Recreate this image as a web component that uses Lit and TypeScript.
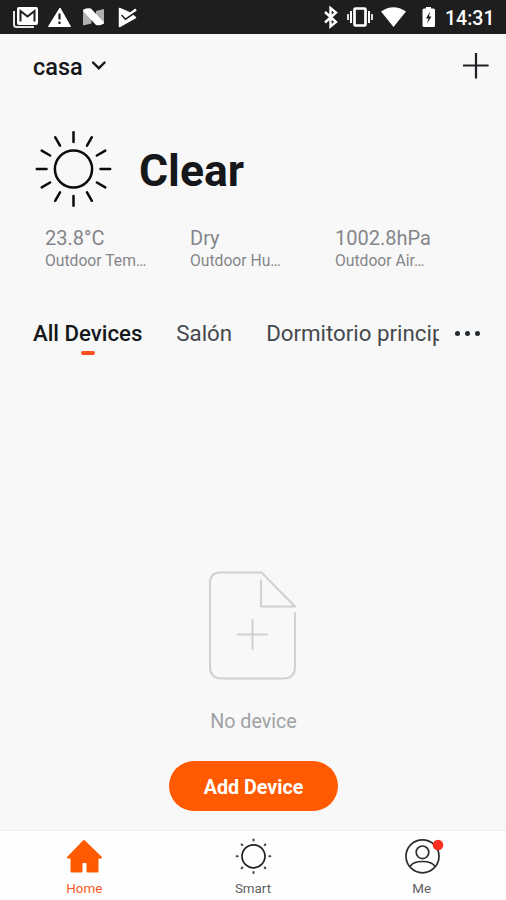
import { LitElement, html, css, svg } from "lit";
import { customElement } from "lit/decorators.js";

const rays = (n: number, cx: number, cy: number, r1: number, r2: number) =>
  Array.from({ length: n }, (_, i) => {
    const a = (i * 2 * Math.PI) / n;
    return svg`<line x1=${cx + r1 * Math.cos(a)} y1=${cy + r1 * Math.sin(a)} x2=${cx + r2 * Math.cos(a)} y2=${cy + r2 * Math.sin(a)} />`;
  });

@customElement("app-root")
export class AppRoot extends LitElement {
  static styles = css`
    :host {
      display: flex;
      flex-direction: column;
      width: 506px;
      height: 900px;
      overflow: hidden;
      background: #f8f8f8;
      color: #15171a;
      font-family: Roboto, sans-serif;
    }
    * { box-sizing: border-box; }
    svg { display: block; flex: none; }
    .status {
      height: 34px;
      flex: none;
      background: #1e1e1e;
      display: flex;
      align-items: center;
      justify-content: space-between;
      color: #fff;
      padding-right: 11px;
    }
    .status-right { display: flex; align-items: center; }
    .clock { font-size: 19.5px; font-weight: 500; line-height: 34px; padding-top: 3px; width: 50px; white-space: nowrap; }
    .header {
      height: 64px;
      flex: none;
      display: flex;
      align-items: center;
      justify-content: space-between;
      padding: 0 17px 0 33px;
    }
    .home { display: flex; align-items: center; gap: 8px; font-size: 23.5px; font-weight: 500; line-height: 28px; }
    .home-name { padding-top: 2px; }
    .weather { display: flex; align-items: center; gap: 27px; height: 80px; flex: none; margin: 31px 0 0 35px; }
    .condition { font-size: 44.5px; font-weight: 700; line-height: 52px; padding-top: 4px; white-space: nowrap; }
    .metrics { display: grid; grid-template-columns: 145px 145px 145px; margin: 17px 0 0 45px; color: #85868a; flex: none; }
    .value { font-size: 20px; line-height: 24px; }
    .label { font-size: 15.7px; line-height: 20px; padding-top: 1px; }
    .tabs { display: flex; margin: 48px 0 0 33px; height: 38px; flex: none; font-size: 22.3px; line-height: 28px; }
    .rooms { display: flex; gap: 34px; width: 406px; overflow: hidden; white-space: nowrap; color: #45484c; }
    .tab { flex: none; }
    .tab.active { color: #15171a; font-weight: 500; font-size: 22.2px; display: flex; flex-direction: column; align-items: center; }
    .tab.active::after { content: ""; width: 14px; height: 4px; border-radius: 2px; background: #fb4d20; margin-top: 4px; }
    .more { display: flex; gap: 5px; padding: 12px 0 0 16px; }
    .dot { width: 5px; height: 5px; border-radius: 50%; background: #222a30; }
    .empty { flex: 1; display: flex; flex-direction: column; align-items: center; padding-top: 213px; }
    .empty-text { color: #a0a2a5; font-size: 19.7px; line-height: 24px; margin: 30px 0 0 1px; }
    .add {
      width: 169px; height: 50px; margin-top: 27px;
      border: 0; border-radius: 25px; background: #ff5a00; color: #fff;
      font: 700 19.7px/50px Roboto, sans-serif; padding: 2px 0 0 1px; text-align: center;
    }
    .nav { height: 70px; flex: none; background: #fefefe; border-top: 1px solid #ededed; display: grid; grid-template-columns: 1fr 1fr 1fr; }
    .nav-item { display: flex; flex-direction: column; align-items: center; padding-top: 5px; font-size: 13.4px; line-height: 16px; color: #5e6063; gap: 5px; }
    .nav-item.active { color: #fb5a25; }
  `;

  private metric(value: string, label: string) {
    return html`<div><div class="value">${value}</div><div class="label">${label}</div></div>`;
  }

  render() {
    return html`
      <div class="status">
        <svg width="150" height="34" viewBox="0 0 150 34">
          <path d="M14 11v13.500a2.500 2.500 0 0 0 2.500 2.500H34" fill="none" stroke="#e4e4e4" stroke-width="2"/>
          <rect x="17" y="7" width="21" height="18" rx="2" fill="#fff"/>
          <path d="M20.500 21.500V11l7 5.500 7-5.500v10.500" fill="none" stroke="#1e1e1e" stroke-width="2"/>
          <path d="M60 8l10.500 18.500h-22z" fill="#fff" stroke="#fff" stroke-width="1" stroke-linejoin="round"/>
          <path d="M59.500 13.500v6M59.500 21.500v2.500" stroke="#1e1e1e" stroke-width="2.200"/>
          <path d="M83 9.500v16l8.500-2V11zM104 9v15l-8-3V11z" fill="#b0b0b0"/>
          <path d="M83 11q1-3.500 8-2.500L104 22.500q-1.500 3.500-8 2.500z" fill="#fff"/>
          <path d="M119.500 8.500L130 13l5.500 4.500L119.500 26.500z" fill="#fff" stroke="#fff" stroke-width="1.500" stroke-linejoin="round"/>
          <path d="M121 13.500l4 4.500 11-8.500" fill="none" stroke="#fff" stroke-width="2.500"/>
          <path d="M121.500 15l4 4.200 9.500-6.500" fill="none" stroke="#1e1e1e" stroke-width="1.500"/>
        </svg>
        <div class="status-right">
          <svg width="125" height="34" viewBox="320 0 125 34">
            <path d="M325 12l11 10-5.500 4.500V8l5.500 4.500-11 10" fill="none" stroke="#fff" stroke-width="2.400"/>
            <rect x="354.500" y="8.500" width="11" height="17" rx="1" fill="none" stroke="#fff" stroke-width="2.700"/>
            <path d="M351 11v12M369 11v12" stroke="#fff" stroke-width="2"/><path d="M348 14v6M372 14v6" stroke="#ddd" stroke-width="2"/>
            <path d="M381 11.500q12.500-8.500 25 0L393.500 27z" fill="#fff"/>
            <path d="M424 8.500h2V7h5v1.500h2.500q1.500 0 1.500 1.500v15.500q0 1.500-1.500 1.500H424q-1.500 0-1.500-1.500V10q0-1.500 1.500-1.500z" fill="#fff"/>
            <path d="M430 11.500l-4 7h2.500l-1.500 5 4.500-7h-2.500z" fill="#1e1e1e"/>
          </svg>
          <div class="clock">14:31</div>
        </div>
      </div>

      <div class="header">
        <div class="home"><span class="home-name">casa</span>
          <svg width="16" height="12" viewBox="0 0 16 12"><path d="M2 2.500l5.800 5.700 5.800-5.700" fill="none" stroke="#15171a" stroke-width="2.400" stroke-linecap="round"/></svg>
        </div>
        <svg width="26" height="26" viewBox="0 0 26 26"><path d="M.8 12.500h24M13 .2v24.500" stroke="#1e2026" stroke-width="2.200" stroke-linecap="round"/></svg>
      </div>

      <div class="weather">
        <svg width="77" height="80" viewBox="35 129 77 80" fill="none" stroke="#0b0b0b" stroke-width="2.500" stroke-linecap="round">
          <circle cx="73.500" cy="169" r="18.600"/>${rays(12, 73.5, 169, 27, 36.7)}
        </svg>
        <div class="condition">Clear</div>
      </div>

      <div class="metrics">
        ${this.metric("23.8°C", "Outdoor Tem…")}
        ${this.metric("Dry", "Outdoor Hu…")}
        ${this.metric("1002.8hPa", "Outdoor Air…")}
      </div>

      <div class="tabs">
        <div class="rooms">
          <div class="tab active">All Devices</div>
          <div class="tab">Salón</div>
          <div class="tab">Dormitorio principal</div>
        </div>
        <div class="more"><div class="dot"></div><div class="dot"></div><div class="dot"></div></div>
      </div>

      <div class="empty">
        <svg width="90" height="110" viewBox="208 570 90 110" fill="none" stroke="#ced1d2" stroke-width="2" stroke-linecap="round" stroke-linejoin="round">
          <path d="M261 580.500V606.500H295L261.500 572.500H220Q210 573 210 583V667Q210 678 221 678.500H284Q295 678 295 667V613"/>
          <path d="M237.500 634.500H267M252.500 620V649"/>
        </svg>
        <div class="empty-text">No device</div>
        <button class="add">Add Device</button>
      </div>

      <div class="nav">
        <div class="nav-item active">
          <svg width="40" height="40" viewBox="64.500 836 40 40"><path d="M84.500 841L101.500 857.500H98V871.500H88V863Q84.500 860.500 82 863V871.500H72V857.500H68.500Z" fill="#ff5a00" stroke="#ff5a00" stroke-width="2" stroke-linejoin="round"/></svg>
          <span>Home</span>
        </div>
        <div class="nav-item">
          <svg width="40" height="40" viewBox="233 836 40 40" fill="none" stroke="#222" stroke-width="1.700" stroke-linecap="round"><circle cx="253.500" cy="856.300" r="11.500"/><g stroke="#444" stroke-width="2">${rays(8, 253.5, 856.3, 15.8, 16.8)}</g></svg>
          <span>Smart</span>
        </div>
        <div class="nav-item">
          <svg width="44" height="40" viewBox="400 836 44 40" fill="none" stroke="#2b2d30" stroke-width="1.700"><circle cx="422.500" cy="856.300" r="16.500"/><circle cx="422.500" cy="852.300" r="6.300"/><path d="M410 866.500Q413 861.500 422.500 861.500T435 866.500"/><circle cx="438" cy="845" r="5.300" fill="#fc2f1e" stroke="none"/></svg>
          <span>Me</span>
        </div>
      </div>
    `;
  }
}
